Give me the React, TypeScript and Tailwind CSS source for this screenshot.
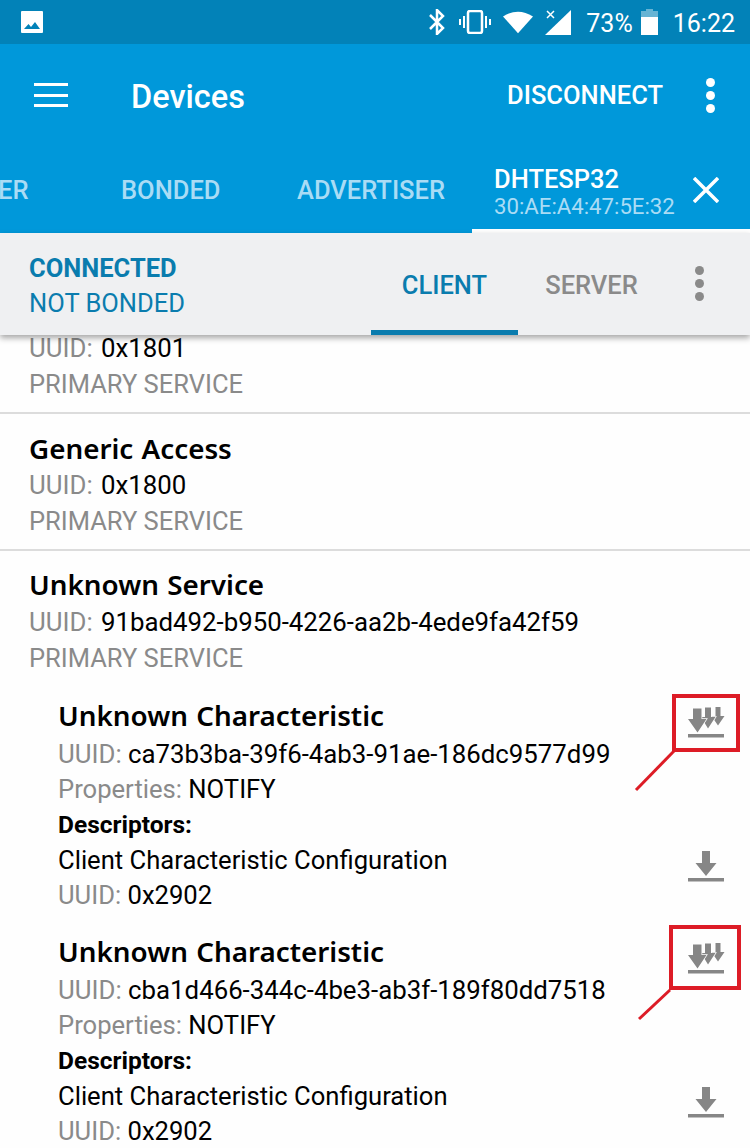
import React from 'react';

function DownloadIcon() {
  return (
    <svg width="38" height="32" viewBox="0 0 38 32" fill="#868686">
      <path d="M14 0h8v12h6.500L18 25 7.500 12H14z" />
      <rect x="0" y="27" width="36" height="3.500" />
    </svg>
  );
}

function NotifyIcon() {
  return (
    <svg width="38" height="32" viewBox="0 0 38 32" fill="#868686">
      <path d="M27.500 0h5v9h4l-6.500 9.500L23.500 9h4z" />
      <path d="M17 0.500h6v9.500h4.500L20 21.500 13 10h4z" stroke="#fff" strokeWidth="1.500" paintOrder="stroke" />
      <path d="M5 1.500h8.500V12H18.500L9.500 25.500 0 12h5z" stroke="#fff" strokeWidth="1.500" paintOrder="stroke" />
      <rect x="0" y="27" width="36" height="3.500" />
    </svg>
  );
}

function Dots({ color }: { color: string }) {
  return (
    <div className="flex flex-col gap-[4px]">
      <div className={`size-[9px] rounded-full ${color}`} />
      <div className={`size-[9px] rounded-full ${color}`} />
      <div className={`size-[9px] rounded-full ${color}`} />
    </div>
  );
}

function ServiceInfo({ uuid }: { uuid: string }) {
  return (
    <>
      <div className="h-[36px] text-[25.800px] leading-[36px] whitespace-nowrap"><span className="text-[#8a8a8a]">UUID:</span> <span className="ml-[2px] text-black">{uuid}</span></div>
      <div className="h-[36px] text-[25.500px] leading-[36px] text-[#8a8a8a]">PRIMARY SERVICE</div>
    </>
  );
}

function Title({ children }: { children: React.ReactNode }) {
  return <div className="h-[38px] text-[27.800px] leading-[38px] font-semibold text-black [font-family:'Noto_Sans',sans-serif] [word-spacing:1px] whitespace-nowrap">{children}</div>;
}

function Characteristic({ uuid, box, line }: { uuid: string; box: string; line: string }) {
  return (
    <div className="relative h-[236px] pl-[58px] text-[25.600px] leading-[35px] text-black">
      <div className="h-[40px]"><Title>Unknown Characteristic</Title></div>
      <div className="h-[35px] text-[25.800px] leading-[36px] whitespace-nowrap"><span className="text-[#8a8a8a]">UUID:</span> {uuid}</div>
      <div className="h-[36px] leading-[36px]"><span className="text-[#8a8a8a]">Properties:</span> NOTIFY</div>
      <div className="h-[36px] text-[24.500px] font-bold">Descriptors:</div>
      <div className="h-[35px]">Client Characteristic Configuration</div>
      <div className="h-[35px]"><span className="text-[#8a8a8a]">UUID:</span> 0x2902</div>
      <div className="absolute left-[688px] top-[11px]"><NotifyIcon /></div>
      <div className="absolute left-[688px] top-[155px]"><DownloadIcon /></div>
      <div className={`absolute border-[4px] border-[#dd1c26] ${box}`} />
      <svg className="absolute left-[630px] top-[40px]" width="50" height="70" viewBox="0 0 50 70">
        <path d={line} stroke="#dd1c26" strokeWidth="3" fill="none" />
      </svg>
    </div>
  );
}

export default function App() {
  return (
    <div className="relative h-[1148px] w-[750px] overflow-hidden bg-[#fefefe] [font-family:Roboto,sans-serif]">
      <div className="relative z-10 shadow-[0_2px_6px_rgba(0,0,0,0.35)]">
        {/* status bar */}
        <div className="flex h-[44px] items-center bg-[#0282b8] pl-[20px] pr-[15px] text-white">
          <svg width="24" height="24" viewBox="0 0 24 24" fill="#fff">
            <path d="M2 1h20a1 1 0 0 1 1 1v20a1 1 0 0 1-1 1H2a1 1 0 0 1-1-1V2a1 1 0 0 1 1-1zm2 18h16l-5-7-4 5-2.500-3z" fillRule="evenodd" />
          </svg>
          <div className="ml-auto flex items-center">
            <svg width="16" height="26" viewBox="0 0 16 26" fill="none" stroke="#fff" strokeWidth="2.500">
              <path d="M1 6l13 13-6 6V1l6 6L1 20" />
            </svg>
            <svg className="ml-[13px]" width="34" height="24" viewBox="0 0 34 24" fill="none" stroke="#fff" strokeWidth="2">
              <rect x="10" y="1" width="14" height="22" rx="2" strokeWidth="2.500" />
              <path d="M6 6v12M2 9v6M28 6v12M32 9v6" />
            </svg>
            <svg className="ml-[11px]" width="30" height="24" viewBox="0 0 32 24" fill="#fff">
              <path d="M0 6Q16-4 32 6L16 24z" />
            </svg>
            <svg className="ml-[12px]" width="26" height="26" viewBox="0 0 26 26" fill="#fff">
              <path d="M26 1v25H0z" />
              <path d="M2 2l7 7M9 2l-7 7" stroke="#fff" strokeWidth="1.500" />
            </svg>
            <span className="ml-[15px] pt-[4px] text-[25px] leading-[30px]">73%</span>
            <svg className="ml-[8px]" width="17" height="26" viewBox="0 0 17 26">
              <path d="M5 0h7v2h5v24H0V2h5z" fill="#fff" fillOpacity="0.4" />
              <path d="M0 8h17v18H0z" fill="#fff" />
            </svg>
            <span className="ml-[15px] pt-[4px] text-[25px] leading-[30px]">16:22</span>
          </div>
        </div>
        {/* app bar */}
        <div className="flex h-[101px] items-center bg-[#0098da] pt-[2px] text-white">
          <div className="ml-[34px] mb-px flex h-[24px] w-[34px] flex-col justify-between">
            <div className="h-[3px] bg-white" /><div className="h-[3px] bg-white" /><div className="h-[3px] bg-white" />
          </div>
          <div className="ml-[63px] mt-[3px] text-[32.500px] font-medium leading-none">Devices</div>
          <div className="ml-auto text-[25.500px] font-medium leading-none">DISCONNECT</div>
          <div className="ml-[43px] mr-[35px]"><Dots color="bg-white" /></div>
        </div>
        {/* device tabs */}
        <div className="relative flex h-[88px] items-center overflow-hidden bg-[#0098da] pt-[4px] text-[25.500px] font-medium text-[#aadcf5]">
          <span className="w-[121px] indent-[-2px] leading-none">ER</span>
          <span className="w-[176px] leading-none">BONDED</span>
          <span className="w-[197px] leading-none">ADVERTISER</span>
          <div className="-mt-[2px] leading-none text-white">
            <div className="pt-px text-[25.500px] leading-[30px]">DHTESP32</div>
            <div className="text-[22.200px] font-normal leading-[24px] text-[#aadcf5]">30:AE:A4:47:5E:32</div>
          </div>
          <svg className="-mt-[2px] ml-[18px]" width="26" height="26" viewBox="0 0 26 26" stroke="#fff" strokeWidth="3.500">
            <path d="M1 1l24 24M25 1L1 25" />
          </svg>
          <div className="absolute bottom-0 left-[472px] right-0 h-[4px] bg-white" />
        </div>
      </div>
      {/* connection bar */}
      <div className="relative z-10 flex h-[102px] items-center bg-[#eff0f2] pl-[29px] shadow-[0_3px_6px_rgba(0,0,0,0.35)]">
        <div className="w-[342px] pt-[4px] text-[25.500px] leading-[35px] text-[#0a7cae]">
          <div className="font-bold">CONNECTED</div>
          <div>NOT BONDED</div>
        </div>
        <div className="flex h-full w-[147px] items-center justify-center border-b-[5px] border-[#0a7cae] pt-[8px] text-[25.500px] font-medium text-[#0a7cae]">CLIENT</div>
        <div className="flex h-full w-[147px] items-center justify-center border-b-[5px] border-transparent pt-[8px] text-[25.500px] font-medium text-[#8a8a8a]">SERVER</div>
        <div className="ml-[30px] mb-[2px]"><Dots color="bg-[#8a8a8a]" /></div>
      </div>
      {/* services */}
      <div className="-mt-[5px] h-[84px] border-b-2 border-[#dcdcdc] pl-[29px]">
        <ServiceInfo uuid="0x1801" />
      </div>
      <div className="h-[137px] border-b-2 border-[#dcdcdc] pl-[29px] pt-[15px]">
        <Title>Generic Access</Title>
        <ServiceInfo uuid="0x1800" />
      </div>
      <div className="h-[145px] pl-[29px] pt-[14px]">
        <div className="h-[39px]"><Title>Unknown Service</Title></div>
        <ServiceInfo uuid="91bad492-b950-4226-aa2b-4ede9fa42f59" />
      </div>
      <Characteristic uuid="ca73b3ba-39f6-4ab3-91ae-186dc9577d99" box="left-[672px] top-[-2px] h-[58px] w-[68px]" line="M45 14L6 54" />
      <Characteristic uuid="cba1d466-344c-4be3-ab3f-189f80dd7518" box="left-[669px] top-[-7px] h-[65px] w-[72px]" line="M40 18L9 47" />
    </div>
  );
}
